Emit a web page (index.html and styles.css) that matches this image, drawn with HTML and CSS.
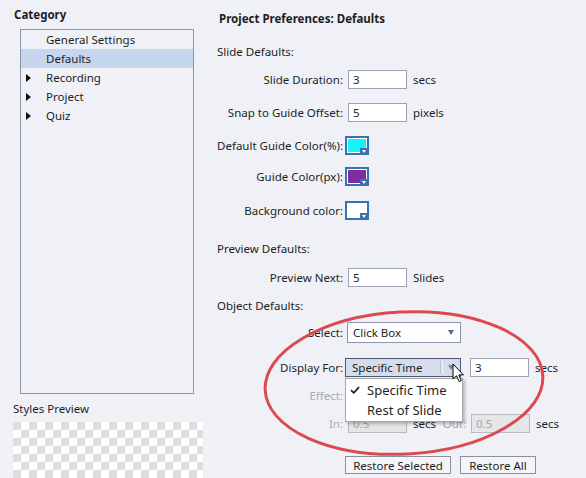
FILE: index.html
```html
<!DOCTYPE html>
<html>
<head>
<meta charset="utf-8">
<link rel="stylesheet" href="styles.css">
</head>
<body>
<div class="app">
  <aside class="left">
    <div class="cat-title">Category</div>
    <div class="cat-list">
      <div class="cat-item"><span class="marker"></span>General Settings</div>
      <div class="cat-item selected"><span class="marker"></span>Defaults</div>
      <div class="cat-item"><span class="marker"><span class="tri"></span></span>Recording</div>
      <div class="cat-item"><span class="marker"><span class="tri"></span></span>Project</div>
      <div class="cat-item"><span class="marker"><span class="tri"></span></span>Quiz</div>
    </div>
    <div class="sp-title">Styles Preview</div>
    <div class="checker"></div>
  </aside>

  <main class="right">
    <div class="title">Project Preferences: Defaults</div>

    <div class="section s-slide">Slide Defaults:</div>
    <div class="row r-duration"><span class="lbl">Slide Duration:</span><span class="input">3</span><span class="unit">secs</span></div>
    <div class="row r-snap"><span class="lbl">Snap to Guide Offset:</span><span class="input">5</span><span class="unit">pixels</span></div>
    <div class="row r-guide"><span class="lbl">Default Guide Color(%):</span><span class="swatch"><span class="swatch-fill cyan"></span><span class="swatch-tab"></span></span></div>
    <div class="row r-guidepx"><span class="lbl">Guide Color(px):</span><span class="swatch"><span class="swatch-fill purple"></span><span class="swatch-tab"></span></span></div>
    <div class="row r-bg"><span class="lbl">Background color:</span><span class="swatch"><span class="swatch-fill white"></span><span class="swatch-tab"></span></span></div>

    <div class="section s-preview">Preview Defaults:</div>
    <div class="row r-next"><span class="lbl">Preview Next:</span><span class="input">5</span><span class="unit">Slides</span></div>

    <div class="section s-object">Object Defaults:</div>
    <div class="row r-select"><span class="lbl">Select:</span><span class="select"><span>Click Box</span><span class="arrow"></span></span></div>
    <div class="row r-display">
      <span class="lbl">Display For:</span>
      <span class="dselect">
        <span class="dtext">Specific Time</span><span class="sep"></span><span class="darrow"></span>
        <span class="menu">
          <span class="menu-item"><span class="check"><svg width="10" height="8" viewBox="0 0 10 8"><path d="M1 4.2 L3.8 6.8 L9 1.2" fill="none" stroke="#222" stroke-width="1.8"/></svg></span>Specific Time</span>
          <span class="menu-item"><span class="check"></span>Rest of Slide</span>
        </span>
      </span>
      <span class="input in-3">3</span><span class="unit">secs</span>
    </div>
    <div class="row r-effect"><span class="lbl dis">Effect:</span></div>
    <div class="row r-inout"><span class="lbl dis">In:</span><span class="input disabled">0.5</span><span class="unit unit-in">secs</span><span class="lbl-out dis">Out:</span><span class="input disabled">0.5</span><span class="unit">secs</span></div>
    <div class="row r-buttons"><span class="lbl"></span><button class="btn btn-sel">Restore Selected</button><button class="btn btn-all">Restore All</button></div>
  </main>

  <svg class="cursor" width="14" height="20" viewBox="0 0 14 20"><path d="M1 1 L1 16 L4.5 12.8 L7.2 18.6 L9.4 17.6 L6.8 11.9 L11.5 11.9 Z" fill="#fff" stroke="#000" stroke-width="1" stroke-linejoin="round"/></svg>

  <svg class="ellipse" width="586" height="478" viewBox="0 0 586 478"><ellipse cx="404" cy="383" rx="139" ry="71" transform="rotate(-3 404 383)" fill="none" stroke="#dc4a50" stroke-width="3"/></svg>
</div>
</body>
</html>
```

FILE: styles.css
```css
* { box-sizing: border-box; }
body {
  margin: 0;
  background: #eff1f6;
  font-family: "Noto Sans", "Open Sans", sans-serif;
  font-size: 11.5px;
  color: #1e1e1e;
}
.app {
  position: relative;
  display: flex;
  width: 586px;
  height: 478px;
  overflow: hidden;
}
.left { width: 205px; flex: none; }
.cat-title {
  font-weight: bold;
  margin: 7px 0 0 14px;
  height: 16px;
  line-height: 16px;
}
.cat-list {
  margin: 6px 0 0 20px;
  width: 174px;
  height: 365px;
  border: 1px solid #8e94a6;
}
.cat-item {
  display: flex;
  align-items: center;
  height: 19px;
}
.cat-item.selected { background: #c6d6ee; }
.marker {
  width: 25px;
  flex: none;
  padding-left: 5px;
  display: flex;
  align-items: center;
}
.tri {
  width: 0;
  height: 0;
  border-left: 5px solid #111;
  border-top: 4px solid transparent;
  border-bottom: 4px solid transparent;
}
.sp-title {
  margin: 7px 0 0 13px;
  height: 16px;
  line-height: 16px;
}
.checker {
  margin: 5px 0 0 13px;
  width: 190px;
  height: 57px;
  background-color: #fff;
  background-image: conic-gradient(#fff 25%, #dedede 0 50%, #fff 0 75%, #dedede 0);
  background-size: 16px 16px;
}

.right {
  flex: 1;
  display: flex;
  flex-direction: column;
}
.title {
  font-weight: bold;
  margin: 11px 0 0 14px;
  height: 16px;
  line-height: 16px;
}
.section {
  margin-left: 12px;
  height: 16px;
  line-height: 16px;
}
.s-slide { margin-top: 17px; }
.s-preview { margin-top: 21px; }
.s-object { margin-top: 11px; }

.row {
  display: flex;
  align-items: center;
  height: 19px;
}
.r-duration { margin-top: 10px; }
.r-snap { margin-top: 14px; }
.r-guide { margin-top: 14px; }
.r-guidepx { margin-top: 12px; }
.r-bg { margin-top: 15px; }
.r-next { margin-top: 11px; }
.r-select { margin-top: 8px; height: 21px; }
.r-display { margin-top: 15px; }
.r-effect { margin-top: 9px; }
.r-inout { margin-top: 9px; }
.r-buttons { margin-top: 23px; height: 18px; }

.lbl {
  width: 138px;
  flex: none;
  text-align: right;
}
.dis { color: #a9abb0; }
.input {
  width: 59px;
  height: 19px;
  flex: none;
  margin-left: 5px;
  padding-left: 4px;
  line-height: 17px;
  border: 1px solid #9ca2b3;
  background: #fff;
}
.input.disabled {
  background: #e5e6e8;
  border-color: #b8babf;
  color: #a4a6aa;
}
.unit { margin-left: 6px; }
.unit-in { width: 26px; flex: none; }
.lbl-out { width: 27px; text-align: right; flex: none; }
.in-3 { margin-left: 9px; }

.swatch {
  position: relative;
  width: 24px;
  height: 19px;
  margin-left: 2px;
  border: 2px solid #3a72b0;
}
.swatch-fill {
  position: absolute;
  inset: 0;
  border: 1px solid #fff;
}
.cyan { background: #16f4fb; }
.purple { background: #7a2ea0; }
.white { background: #fff; }
.swatch-tab {
  position: absolute;
  right: -2px;
  bottom: -2px;
  width: 9px;
  height: 7px;
  background: #3a72b0;
}
.swatch-tab::after {
  content: "";
  position: absolute;
  left: 2px;
  top: 2px;
  border-top: 3px solid #fff;
  border-left: 2.5px solid transparent;
  border-right: 2.5px solid transparent;
}

.select {
  width: 114px;
  height: 21px;
  margin-left: 4px;
  padding-left: 5px;
  display: flex;
  align-items: center;
  justify-content: space-between;
  border: 1px solid #8f96a9;
  background: #fdfdfe;
}
.arrow {
  margin-right: 6px;
  border-top: 5px solid #5e677b;
  border-left: 3.5px solid transparent;
  border-right: 3.5px solid transparent;
}
.dselect {
  position: relative;
  width: 116px;
  height: 19px;
  margin-left: 2px;
  display: flex;
  align-items: center;
  flex: none;
  border: 1px solid #4d5872;
  background: #d5dcea;
  padding-left: 6px;
}
.dtext { flex: 1; }
.sep {
  width: 3px;
  height: 13px;
  border-left: 1px solid #b9c1d2;
  border-right: 1px solid #eef1f7;
  margin-right: 5px;
}
.darrow {
  margin-right: 6px;
  border-top: 5px solid #7c87a0;
  border-left: 3.5px solid transparent;
  border-right: 3.5px solid transparent;
}
.menu {
  position: absolute;
  left: -1px;
  top: 19px;
  width: 118px;
  height: 44px;
  padding: 1px 0;
  display: flex;
  flex-direction: column;
  background: #fff;
  border: 1px solid #a5a7ab;
  box-shadow: 2px 2px 3px rgba(0, 0, 0, 0.25);
  z-index: 2;
}
.menu-item {
  display: flex;
  align-items: center;
  height: 21px;
  font-size: 13px;
}
.check {
  width: 21px;
  flex: none;
  padding-left: 4px;
  display: flex;
  align-items: center;
}

.btn {
  height: 18px;
  margin: 0;
  padding: 0;
  font: inherit;
  color: #1e1e1e;
  border: 1px solid #8b909c;
  background: #f4f5f8;
}
.btn-sel { width: 106px; margin-left: 2px; }
.btn-all { width: 76px; margin-left: 9px; }

.cursor {
  position: absolute;
  left: 452px;
  top: 363px;
  z-index: 3;
}
.ellipse {
  position: absolute;
  left: 0;
  top: 0;
  pointer-events: none;
  z-index: 4;
}
```
